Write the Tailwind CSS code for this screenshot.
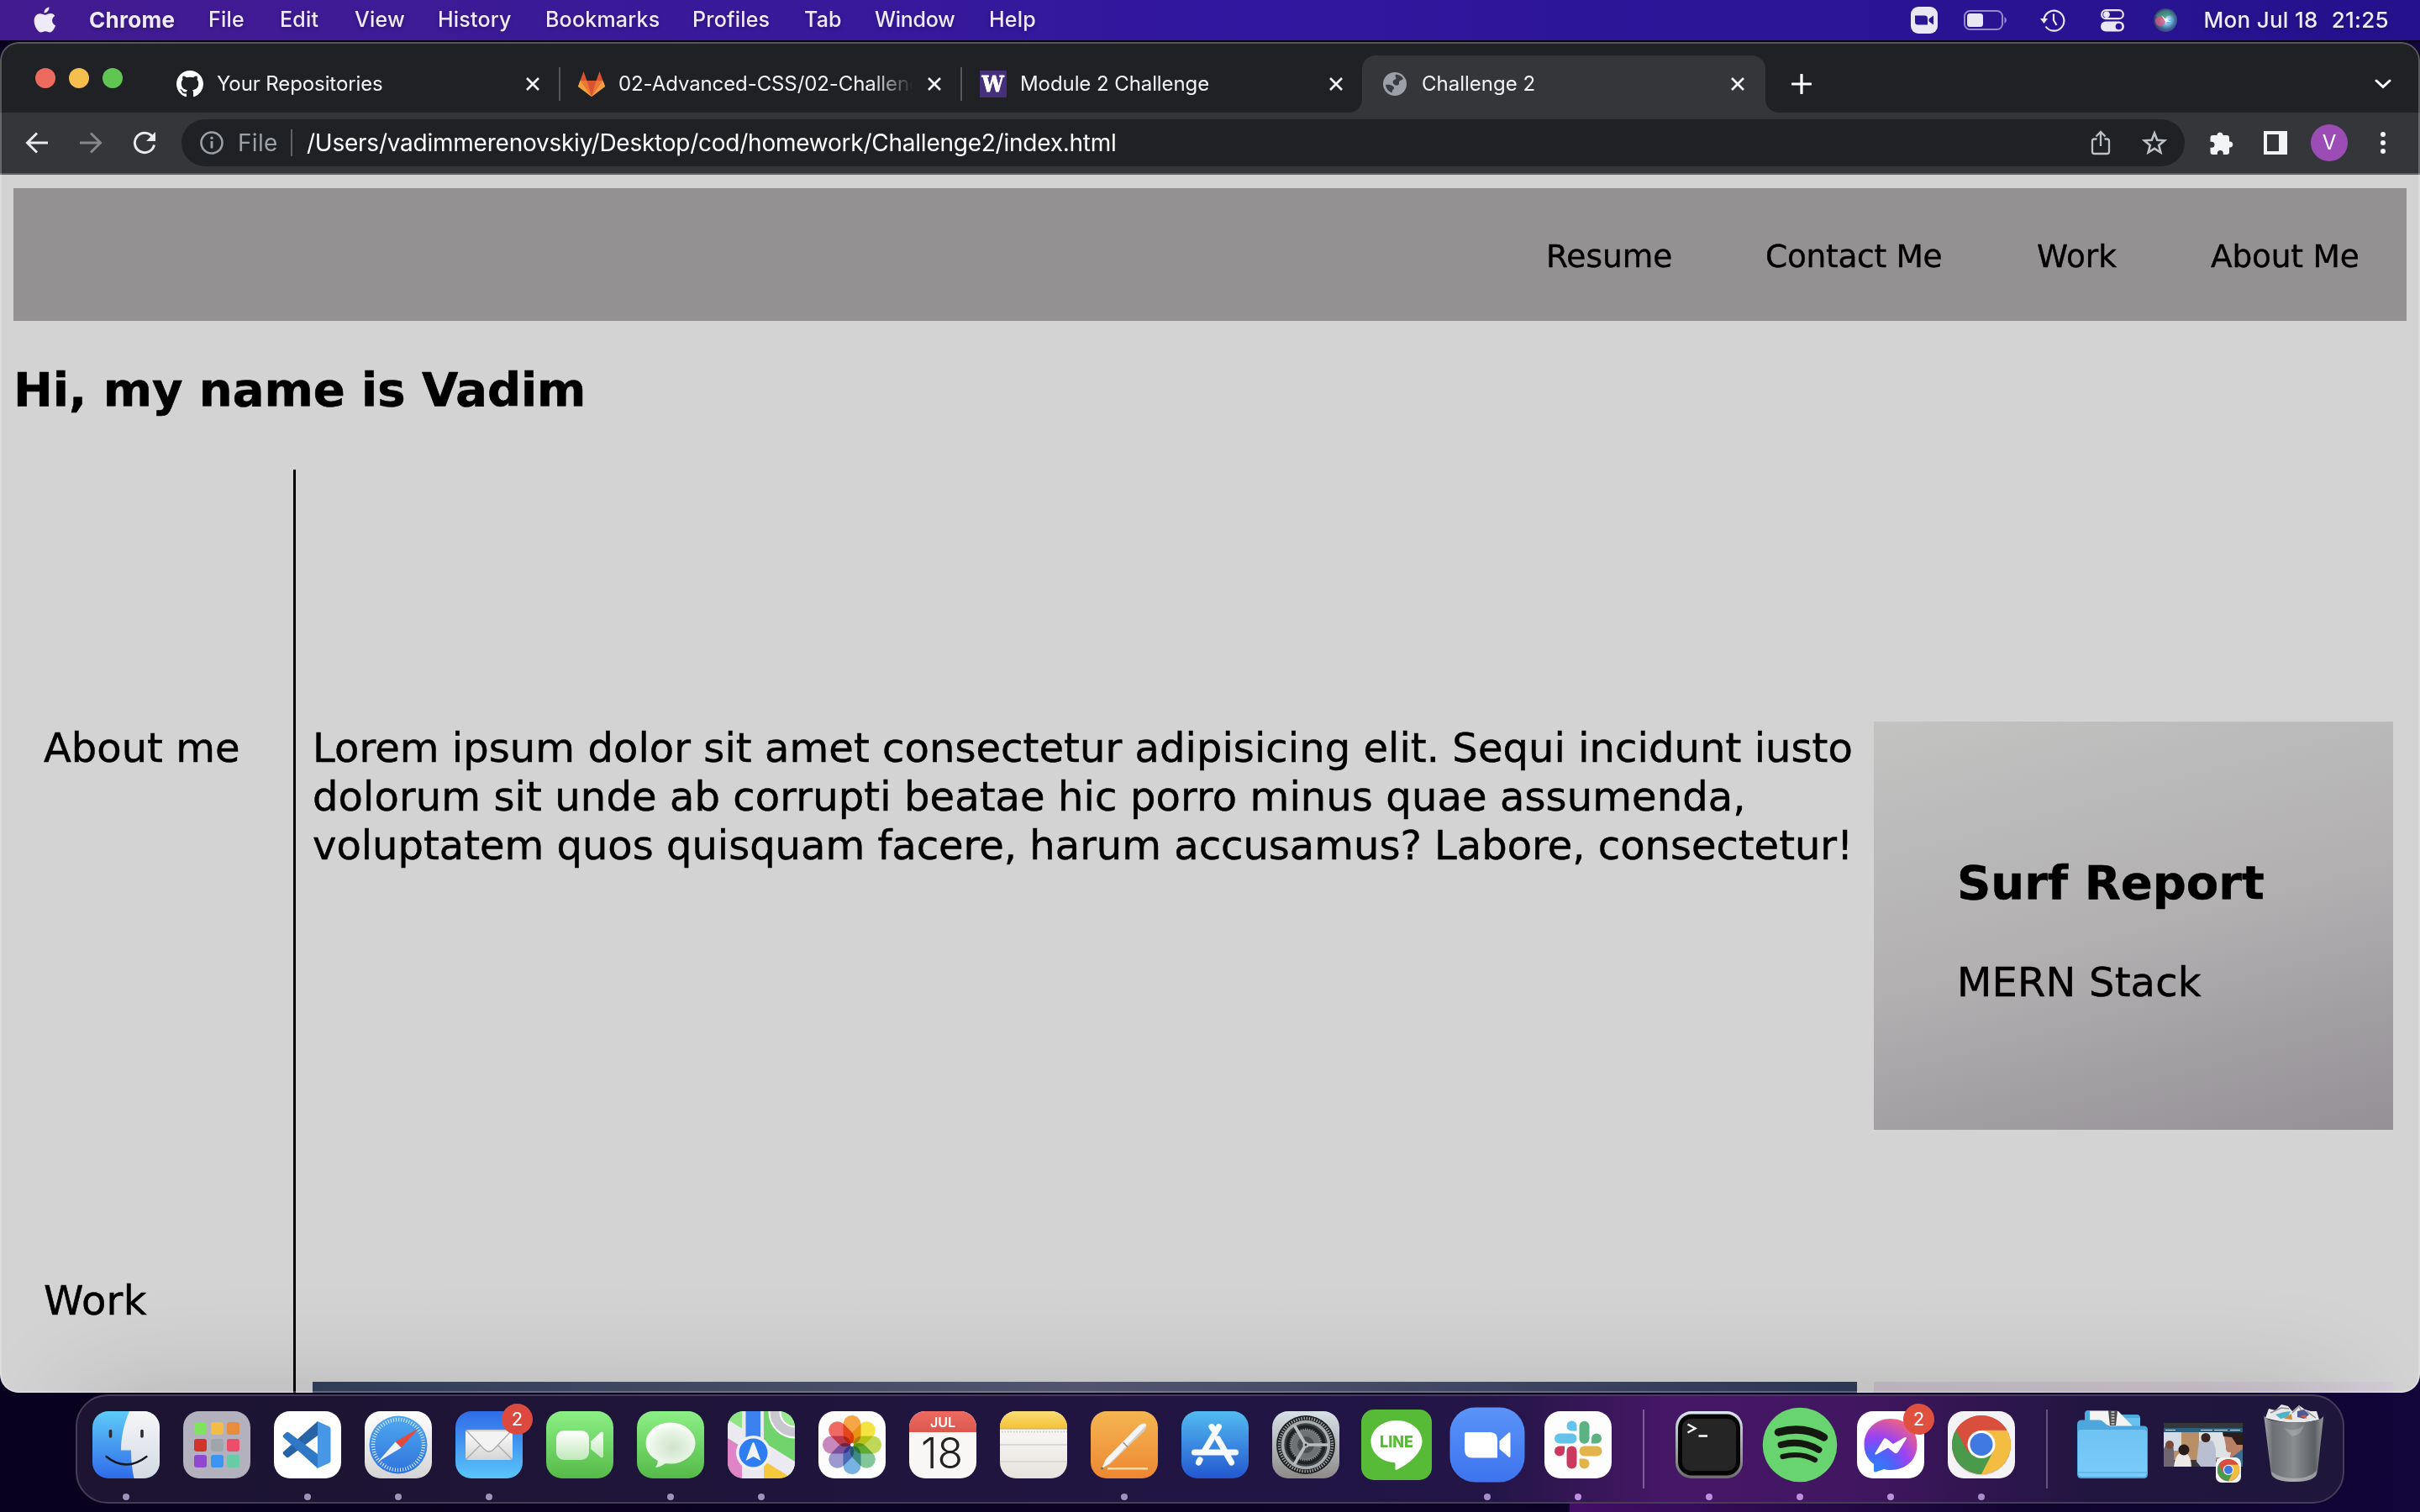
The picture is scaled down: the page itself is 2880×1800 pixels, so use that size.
<!DOCTYPE html>
<html lang="en">
<head>
<meta charset="utf-8">
<title>Challenge 2</title>
<script src="https://cdn.jsdelivr.net/npm/@tailwindcss/browser@4"></script>
</head>
<body class="w-[2880px] h-[1800px] overflow-hidden bg-[#0a0320]">

<!-- Shared gradients and symbols -->
<svg class="absolute w-0 h-0" aria-hidden="true">
  <defs>
    <linearGradient id="gFinder" x1="0" y1="0" x2="0" y2="1"><stop offset="0" stop-color="#5ecbf8"/><stop offset="1" stop-color="#2f6bea"/></linearGradient>
    <linearGradient id="gFace" x1="0" y1="0" x2="0" y2="1"><stop offset="0" stop-color="#f6f6f7"/><stop offset="1" stop-color="#d3dae4"/></linearGradient>
    <linearGradient id="gWhite" x1="0" y1="0" x2="0" y2="1"><stop offset="0" stop-color="#ffffff"/><stop offset="1" stop-color="#d4d4d4"/></linearGradient>
    <linearGradient id="gBlue" x1="0" y1="0" x2="0" y2="1"><stop offset="0" stop-color="#4fa9ee"/><stop offset="1" stop-color="#3073de"/></linearGradient>
    <linearGradient id="gMail" x1="0" y1="0" x2="0" y2="1"><stop offset="0" stop-color="#2f6be9"/><stop offset="1" stop-color="#5ac6f9"/></linearGradient>
    <linearGradient id="gGreen" x1="0" y1="0" x2="0" y2="1"><stop offset="0" stop-color="#8cf086"/><stop offset="1" stop-color="#55ba48"/></linearGradient>
    <linearGradient id="gCam" x1="0" y1="0" x2="0" y2="1"><stop offset="0" stop-color="#ffffff"/><stop offset="1" stop-color="#bfe8b8"/></linearGradient>
    <linearGradient id="gCal" x1="0" y1="0" x2="0" y2="1"><stop offset="0" stop-color="#ee6a60"/><stop offset="1" stop-color="#d9584e"/></linearGradient>
    <linearGradient id="gPaper" x1="0" y1="0" x2="0" y2="1"><stop offset="0" stop-color="#ffffff"/><stop offset="1" stop-color="#e6e2dc"/></linearGradient>
    <linearGradient id="gNote" x1="0" y1="0" x2="0" y2="1"><stop offset="0" stop-color="#f9dc75"/><stop offset="1" stop-color="#f4c236"/></linearGradient>
    <linearGradient id="gPages" x1="0" y1="0" x2="0" y2="1"><stop offset="0" stop-color="#f5b651"/><stop offset="1" stop-color="#ed8733"/></linearGradient>
    <linearGradient id="gStore" x1="0" y1="0" x2="0" y2="1"><stop offset="0" stop-color="#52bbf1"/><stop offset="1" stop-color="#2357cf"/></linearGradient>
    <linearGradient id="gGear" x1="0" y1="0" x2="0" y2="1"><stop offset="0" stop-color="#d7e1e8"/><stop offset="1" stop-color="#8d8a88"/></linearGradient>
    <linearGradient id="gZoom" x1="0" y1="0" x2="0" y2="1"><stop offset="0" stop-color="#5b93f9"/><stop offset="1" stop-color="#3d74ee"/></linearGradient>
    <linearGradient id="gTerm" x1="0" y1="0" x2="0" y2="1"><stop offset="0" stop-color="#d9e6ef"/><stop offset="1" stop-color="#6f6d6e"/></linearGradient>
    <radialGradient id="gMsgr" cx=".2" cy="1" r="1.1"><stop offset="0" stop-color="#2b85f7"/><stop offset=".35" stop-color="#4f62fa"/><stop offset=".6" stop-color="#9a42f5"/><stop offset="1" stop-color="#f3647c"/></radialGradient>
    <linearGradient id="gFold" x1="0" y1="0" x2="0" y2="1"><stop offset="0" stop-color="#6ec3f3"/><stop offset="1" stop-color="#7acbfa"/></linearGradient>
    <linearGradient id="gTrash" x1="0" y1="0" x2="1" y2="0"><stop offset="0" stop-color="#a2a4a7"/><stop offset=".15" stop-color="#6c6f73"/><stop offset=".5" stop-color="#8a8d90"/><stop offset=".85" stop-color="#5c5f63"/><stop offset="1" stop-color="#98999d"/></linearGradient>
    <radialGradient id="gBubble" cx=".55" cy=".6" r=".6"><stop offset="0" stop-color="#cfe3cb"/><stop offset=".7" stop-color="#eaf6e8"/><stop offset="1" stop-color="#ffffff"/></radialGradient>
    <radialGradient id="gSiri" cx=".55" cy=".5" r=".55"><stop offset="0" stop-color="#ffffff"/><stop offset=".3" stop-color="#8fc9e8"/><stop offset=".65" stop-color="#3f6fa0"/><stop offset="1" stop-color="#3a3566"/></radialGradient>
    <clipPath id="clipApp"><rect width="80" height="80" rx="19"/></clipPath>
    <symbol id="chromeLogo" viewBox="0 0 80 80" overflow="visible">
      <rect width="80" height="80" rx="19" fill="#f3f2f4"/>
      <circle cx="40" cy="41.500" r="35" fill="#000" opacity=".12"/>
      <circle cx="40" cy="40" r="35" fill="#d94f3d"/>
      <path d="M40 40 L9.700 22.500 A35 35 0 0 0 40 75 L55 49Z" fill="#4a9a4b"/>
      <path d="M40 75 A35 35 0 0 0 70.300 22.500 L40 22.500 L54 48Z" fill="#f3bd42"/>
      <path d="M9.700 22.500 A35 35 0 0 1 70.300 22.500 H40 L24 49Z" fill="#d94f3d"/>
      <circle cx="40" cy="39.500" r="16.500" fill="#fff"/>
      <circle cx="40" cy="39.500" r="13.500" fill="#4079e2"/>
    </symbol>
    <symbol id="closeX" viewBox="0 0 18 18"><path d="M2 2 L16 16 M16 2 L2 16" stroke="#f1f3f4" stroke-width="2.700" fill="none"/></symbol>
  </defs>
</svg>

<div class="flex h-[1800px] w-[2880px] flex-col bg-linear-to-r from-[#0a0320] from-0% via-[#0d0429] via-64% to-[#12063a] to-100%">

  <!-- Menu bar -->
  <header class="flex h-12 shrink-0 items-center bg-linear-to-r from-[#431b91] via-[#31179f] to-[#25118c] font-[Inter] text-[25px] font-medium tracking-[0.2px] text-[#eeeaf6] text-shadow-[0_2px_4px_rgb(0_0_0/0.25)] pb-[1px] pl-[39px]">
    <div class="w-[67px]">
      <svg class="h-[32px] w-[28px]" viewBox="0 0 28 32" fill="#eeeaf6"><path d="M19.500 0.500 c.3 3.500 -2.800 7 -6 7 c-.4 -3.300 2.900 -6.700 6 -7Z M26.300 11 c-2 1.300 -3.200 3.200 -3.200 5.400 c0 2.700 1.600 4.900 4 5.900 c-.9 2.900 -3.600 8.200 -6.600 8.200 c-2.200 0 -2.700 -1.300 -5.400 -1.300 c-2.700 0 -3.400 1.300 -5.400 1.300 c-3.600 0 -8.100 -7.500 -8.100 -13.800 c0 -5.300 3.400 -8.500 7 -8.500 c2.600 0 4.600 1.600 6.200 1.600 c1.500 0 3.800 -1.700 6.800 -1.700 c1.800 0 3.500 .9 4.700 2.900Z"/></svg>
    </div>
    <div class="w-[142px] text-[26px] font-bold tracking-[0.3px]">Chrome</div>
    <div class="w-[85px]">File</div>
    <div class="w-[89px]">Edit</div>
    <div class="w-[99px]">View</div>
    <div class="w-[128px]">History</div>
    <div class="w-[175px]">Bookmarks</div>
    <div class="w-[133px]">Profiles</div>
    <div class="w-[84px]">Tab</div>
    <div class="w-[136px] tracking-[-0.3px]">Window</div>
    <div>Help</div>
    <div class="ml-auto flex items-center pr-[37px]">
      <svg class="mr-[31px] h-8 w-8" viewBox="0 0 32 32"><rect width="32" height="32" rx="9" fill="#eae7f5"/><path d="M5 10.500h11.500a3.500 3.500 0 0 1 3.500 3.500v7.500H8.500a3.500 3.500 0 0 1-3.500-3.500Z M21.500 14.500 L27 10.500 V21.500 L21.500 17.500Z" fill="#2a1596"/></svg>
      <svg class="mr-[39px] h-6 w-[52px]" viewBox="0 0 52 24"><rect x="1" y="1" width="45" height="22" rx="6.500" fill="none" stroke="#fff" stroke-opacity=".5" stroke-width="2"/><rect x="4" y="4" width="19" height="16" rx="3.500" fill="#eae7f5"/><path d="M48.500 8 a4.500 4.500 0 0 1 0 8Z" fill="#fff" fill-opacity=".5"/></svg>
      <svg class="mr-[42px] h-[28px] w-[30px]" viewBox="0 0 30 28" fill="none" stroke="#eae7f5" stroke-width="2.200"><path d="M4.500 13 A12 12 0 1 1 6.500 21.500"/><path d="M16 6.500 V14 L19.500 20" stroke-width="2.200"/><path d="M0 12 H9 L4.500 18Z" fill="#eae7f5" stroke="none"/></svg>
      <svg class="mr-[35px] h-[28px] w-[28px]" viewBox="0 0 28 28"><rect x="1.200" y="2.200" width="25.600" height="10" rx="5" fill="none" stroke="#eae7f5" stroke-width="2.200"/><circle cx="7" cy="7.200" r="3.800" fill="#eae7f5"/><rect x="0" y="15.500" width="28" height="12" rx="6" fill="#eae7f5"/><circle cx="21.500" cy="21.500" r="3.800" fill="#2a1596"/></svg>
      <svg class="mr-[31px] h-[28px] w-[28px]" viewBox="0 0 28 28"><circle cx="14" cy="14" r="14" fill="url(#gSiri)"/><path d="M2 9 Q8 2 17 2 Q22 4 24 9 Q14 6 14 14Z" fill="#3f8f6a" opacity=".7"/><circle cx="8" cy="15" r="6" fill="#e0567e" opacity=".75"/><path d="M14 14 L24 13 L17 20Z" fill="#5aaef2" opacity=".7"/><path d="M9 8 L15 13 L21 16 L14 16Z" fill="#fff" opacity=".85"/></svg>
      <div class="mr-4 text-[26px] tracking-[0.3px]">Mon Jul 18</div>
      <div class="text-[26px] tracking-[0.3px]">21:25</div>
    </div>
  </header>

  <!-- Browser window -->
  <div class="h-[2px] shrink-0 bg-[#0b0418]"></div>
  <div class="relative flex h-[1608px] shrink-0 flex-col overflow-hidden rounded-[22px] bg-[#202124]">

    <!-- Tab strip -->
    <div class="flex h-[84px] shrink-0 items-end font-[Inter] text-2xl text-[#f1f3f4]">
      <div class="flex h-[84px] w-[188px] items-center gap-4 pl-[42px] pt-[2px]">
        <span class="size-6 rounded-full bg-[#ec6a5e]"></span>
        <span class="size-6 rounded-full bg-[#f4bf4f]"></span>
        <span class="size-6 rounded-full bg-[#61c554]"></span>
      </div>
      <div class="flex h-[68px] w-[478px] items-center pl-[22px] pr-[23px]">
        <svg class="mr-4 size-8 shrink-0" viewBox="0 0 16 16" fill="#fff"><path d="M8 0C3.580 0 0 3.580 0 8c0 3.540 2.290 6.530 5.470 7.590.4.070.55-.17.55-.38 0-.19-.01-.82-.01-1.490-2.010.37-2.530-.49-2.690-.94-.09-.23-.48-.94-.82-1.130-.28-.15-.68-.52-.01-.53.63-.01 1.080.58 1.230.82.72 1.210 1.870.87 2.330.66.07-.52.28-.87.51-1.070-1.780-.2-3.640-.89-3.640-3.950 0-.87.31-1.590.82-2.150-.08-.2-.36-1.020.08-2.120 0 0 .67-.21 2.200.82.64-.18 1.320-.27 2-.27s1.360.09 2 .27c1.530-1.040 2.200-.82 2.200-.82.44 1.100.16 1.920.08 2.120.51.56.82 1.270.82 2.150 0 3.070-1.870 3.750-3.650 3.950.29.25.54.73.54 1.480 0 1.070-.01 1.930-.01 2.200 0 .21.15.46.55.38A8.010 8.010 0 0 0 16 8c0-4.420-3.580-8-8-8Z"/></svg>
        <span class="flex-1 tracking-[-0.1px]">Your Repositories</span>
        <svg class="size-[18px]"><use href="#closeX"/></svg>
      </div>
      <div class="flex h-[68px] w-[478px] items-center">
        <span class="-ml-[1px] h-10 w-[2px] bg-[#56585c]"></span>
        <svg class="ml-[21px] mr-4 size-8 shrink-0" viewBox="0 0 32 32"><path d="M16 31 L0 19 L2.500 12 H29.500 L32 19Z" fill="#f0a13c"/><path d="M16 31 L2.500 12 L6.500 1 L10.500 12 H21.500 L25.500 1 L29.500 12Z" fill="#d9532f"/><path d="M16 31 L2.500 12 H10.500Z M16 31 L29.500 12 H21.500Z" fill="#ec7637"/><path d="M16 31 L2.500 12 L0 19Z M16 31 L29.500 12 L32 19Z" fill="#f0a13c"/></svg>
        <span class="w-[351px] overflow-hidden whitespace-nowrap tracking-[-0.1px] [mask-image:linear-gradient(90deg,#000_86%,transparent_100%)]">02-Advanced-CSS/02-Challeng</span>
        <svg class="ml-4 size-[18px]"><use href="#closeX"/></svg>
      </div>
      <div class="flex h-[68px] w-[477px] items-center pr-[22px]">
        <span class="-ml-[1px] h-10 w-[2px] bg-[#56585c]"></span>
        <span class="ml-[21px] mr-4 flex size-8 items-center justify-center bg-[#46307c] font-['DejaVu_Serif'] text-[26px] font-bold leading-none text-white"><span class="scale-x-90 [-webkit-text-stroke:0.8px_white]">W</span></span>
        <span class="flex-1 tracking-[-0.08px]">Module 2 Challenge</span>
        <svg class="size-[18px]"><use href="#closeX"/></svg>
      </div>
      <div class="relative flex h-[68px] w-[480px] items-center rounded-t-[16px] bg-[#35363a] pl-[25px] pr-[24px]">
        <svg class="absolute bottom-0 -left-4 size-4" viewBox="0 0 16 16"><path d="M16 0 V16 H0 A16 16 0 0 0 16 0Z" fill="#35363a"/></svg>
        <svg class="absolute bottom-0 -right-4 size-4" viewBox="0 0 16 16"><path d="M0 0 V16 H16 A16 16 0 0 1 0 0Z" fill="#35363a"/></svg>
        <svg class="mr-[18px] size-[28px] shrink-0" viewBox="0 0 28 28"><circle cx="14" cy="14" r="14" fill="#9aa0a6"/><path d="M15 2.800 C19 2.800 22.500 5 24 8 C22.500 9.500 21 9 19.500 10.500 C18.500 12 19.500 13.500 18.500 14.800 C17 16.500 14 15.500 12.500 14 C11 12.500 11.500 10.500 12.500 9.500 C13.500 8.500 15.500 8.500 15.500 7 C15.500 5.500 13.500 5 15 2.800Z M3 15 C5.500 14.300 9.500 14.800 11.500 16.500 C13.500 18 13.500 19.500 12 20.500 C10.500 21.500 11 23.500 10.500 24.500 C6.500 23 3.500 19.500 3 15Z" fill="#35363a" opacity=".95"/></svg>
        <span class="flex-1">Challenge 2</span>
        <svg class="size-[18px]"><use href="#closeX"/></svg>
      </div>
      <div class="flex h-[68px] flex-1 items-center justify-between pl-[31px] pr-[34px]">
        <svg class="size-6" viewBox="0 0 24 24"><path d="M12 1 V23 M1 12 H23" stroke="#fff" stroke-width="3.200" stroke-linecap="round"/></svg>
        <svg class="h-3 w-5" viewBox="0 0 20 12"><path d="M2 2 L10 9.500 L18 2" stroke="#fff" stroke-width="3" fill="none" stroke-linecap="round"/></svg>
      </div>
    </div>

    <!-- Toolbar -->
    <div class="flex h-[72px] shrink-0 items-center bg-[#35363a] px-3 font-[Inter] text-[28px]">
      <div class="flex w-16 justify-center"><svg class="size-[28px]" viewBox="0 0 28 28"><path d="M27 14 H3 M14 2.500 L2.500 14 L14 25.500" stroke="#e8eaed" stroke-width="3" fill="none"/></svg></div>
      <div class="flex w-16 justify-center"><svg class="size-[28px]" viewBox="0 0 28 28"><path d="M1 14 H25 M14 2.500 L25.500 14 L14 25.500" stroke="#85878b" stroke-width="3" fill="none"/></svg></div>
      <div class="flex w-16 justify-center"><svg class="size-[28px]" viewBox="0 0 28 28"><path d="M23.500 7 A11.700 11.700 0 1 0 25.500 16.500" stroke="#e8eaed" stroke-width="3" fill="none"/><path d="M27 1 V12 H16Z" fill="#e8eaed"/></svg></div>
      <div class="ml-3 flex h-14 w-[2384px] items-center rounded-full bg-[#202124] pl-[22px] pr-1">
        <svg class="size-[28px] shrink-0" viewBox="0 0 28 28"><circle cx="14" cy="14" r="12.500" stroke="#9aa0a6" stroke-width="2.600" fill="none"/><path d="M14 12 V20.500" stroke="#9aa0a6" stroke-width="2.800"/><circle cx="14" cy="8.300" r="1.700" fill="#9aa0a6"/></svg>
        <span class="ml-[17px] w-[63px] tracking-[0.3px] text-[#9aa0a6]">File</span>
        <span class="h-8 w-[2px] bg-[#5f6368]"></span>
        <span class="ml-[17px] flex-1 whitespace-nowrap tracking-[-0.24px] text-white">/Users/vadimmerenovskiy/Desktop/cod/homework/Challenge2/index.html</span>
        <div class="flex w-16 justify-center"><svg class="h-[30px] w-[24px]" viewBox="0 0 24 30"><path d="M7.500 10.500 H4.500 A2.500 2.500 0 0 0 2 13 V25.500 A2.500 2.500 0 0 0 4.500 28 H19.500 A2.500 2.500 0 0 0 22 25.500 V13 A2.500 2.500 0 0 0 19.500 10.500 H16.500 M12 19 V2.500 M6.500 7.500 L12 2 L17.500 7.500" stroke="#bdc1c6" stroke-width="2.300" fill="none"/></svg></div>
        <div class="flex w-16 justify-center"><svg class="size-[30px]" viewBox="0 0 30 30"><path d="M15 3.500 L18.200 11.700 L27 12.300 L20.200 18 L22.400 26.500 L15 21.800 L7.600 26.500 L9.800 18 L3 12.300 L11.800 11.700Z" stroke="#bdc1c6" stroke-width="2.600" fill="none"/></svg></div>
      </div>
      <div class="ml-3 flex w-16 justify-center"><svg class="size-[30px]" viewBox="0 0 30 30" fill="#f1f3f4"><path d="M9.500 5 A3.700 3.700 0 0 1 16.500 5 V6 H21 A3 3 0 0 1 24 9 V13.500 H25.500 A3.600 3.600 0 0 1 25.500 20.500 H24 V26 A3 3 0 0 1 21 29 H16.800 V27.500 A3.500 3.500 0 0 0 9.800 27.500 V29 H4.500 A3 3 0 0 1 1.500 26 V20.800 H3 A3.500 3.500 0 0 0 3 13.800 H1.500 V9 A3 3 0 0 1 4.500 6 H9.500Z"/></svg></div>
      <div class="flex w-16 justify-center"><svg class="size-[28px]" viewBox="0 0 28 28"><path fill-rule="evenodd" d="M0 0 H28 V28 H0Z M4 4 V24 H18 V4Z" fill="#f1f3f4"/></svg></div>
      <div class="flex w-16 justify-center"><span class="flex size-11 items-center justify-center rounded-full bg-[#9c4db5] text-2xl text-white">V</span></div>
      <div class="flex w-16 flex-col items-center gap-1"><span class="size-[6px] rounded-full bg-[#f1f3f4]"></span><span class="size-[6px] rounded-full bg-[#f1f3f4]"></span><span class="size-[6px] rounded-full bg-[#f1f3f4]"></span></div>
    </div>
    <div class="h-[2px] shrink-0 bg-[#5d5e61]"></div>

    <!-- Page -->
    <div class="flex flex-1 flex-col overflow-hidden bg-[#d3d3d3] px-4 pt-4 font-['DejaVu_Sans',Verdana,sans-serif] text-black">
      <nav class="flex h-[158px] shrink-0 items-center justify-end bg-[#949192] pr-[57px] pt-[5px] text-[37.5px] leading-none whitespace-nowrap [-webkit-text-stroke:0.4px_black]">
        <a class="w-[261px]">Resume</a>
        <a class="w-[323px] tracking-[-0.3px]">Contact Me</a>
        <a class="w-[207px]">Work</a>
        <a class="w-[176px] tracking-[-0.2px]">About Me</a>
      </nav>
      <h1 class="mt-[48px] text-[56px] font-bold leading-[68px] tracking-[-0.05px] [-webkit-text-stroke:0.6px_black]">Hi, my name is Vadim</h1>
      <main class="mt-[61px] flex h-[1099px] shrink-0 text-5xl leading-[58px] [-webkit-text-stroke:0.5px_black]">
        <aside class="w-[336px] shrink-0 border-r-[3px] border-black pl-9 pt-[302px]">
          <p class="leading-[58px]">About me</p>
          <p class="mt-[600px] leading-[58px] tracking-[0.3px]">Work</p>
        </aside>
        <section class="ml-5 w-[1838px] shrink-0 pt-[302px]">
          <p class="whitespace-nowrap leading-[58px]"><span class="tracking-[0.06px]">Lorem ipsum dolor sit amet consectetur adipisicing elit. Sequi incidunt iusto</span><br><span class="tracking-[0.1px]">dolorum sit unde ab corrupti beatae hic porro minus quae assumenda,</span><br><span class="tracking-[-0.01px]">voluptatem quos quisquam facere, harum accusamus? Labore, consectetur!</span></p>
          <div class="mt-[610px] h-4 bg-linear-to-r from-[#33415f] via-[#595b78] to-[#2f3b5c]"></div>
        </section>
        <section class="ml-5 w-[618px] shrink-0 pt-[300px]">
          <div class="h-[486px] bg-linear-165 from-[#c3c3c2] via-[#b2b0b1] to-[#949096] pl-[99px] pt-[158px]">
            <h2 class="text-[56px] font-bold leading-[68px]">Surf Report</h2>
            <p class="mt-[55px] leading-[58px] tracking-[0.15px]">MERN Stack</p>
          </div>
          <div class="mt-[300px] h-4 bg-linear-to-r from-[#c9c0c9] to-[#d3cbd5]"></div>
        </section>
      </main>
    </div>
    <div class="pointer-events-none absolute inset-0 rounded-[22px] inset-ring-2 inset-ring-white/25"></div>
  </div>

  <!-- Dock -->
  <div class="relative mt-[2px] h-[140px] shrink-0">
    <div class="absolute bottom-0 left-[1868px] h-[12px] w-[560px] bg-linear-to-r from-[#4a1070] to-transparent"></div>
    <div class="relative ml-[90px] flex h-[130px] w-[2700px] rounded-[38px] border-2 border-[#453c58] bg-linear-to-r from-[#1c1430] from-0% via-[#221547] via-60% to-[#1f163c] to-100% px-1 pt-[18px] shadow-[0_0_130px_rgb(0_0_0/0.17)]">
      <div class="pointer-events-none absolute inset-0 rounded-[36px] bg-[linear-gradient(90deg,transparent_62%,#451765_70%,#431662_78%,transparent_89%)]"></div>

      <div class="relative flex w-27 flex-col items-center">
        <svg class="size-20 overflow-visible" viewBox="0 0 80 80"><g clip-path="url(#clipApp)"><rect width="80" height="80" fill="url(#gFinder)"/><path d="M44 0 C37 16 34 32 34 46.500 H46 C46 60 47.500 70 49.500 80 H80 V0Z" fill="url(#gFace)"/></g><path d="M21.500 23.500 V30 M59 23.500 V30" stroke="#2a2c33" stroke-width="3.600" stroke-linecap="round"/><path d="M16.500 54 Q40 73 64.500 54" stroke="#16181d" stroke-width="2.400" fill="none" stroke-linecap="round"/></svg>
        <span class="mt-[18px] size-2 rounded-full bg-[#9d93b8]"></span>
      </div>
      <div class="relative flex w-27 flex-col items-center">
        <svg class="size-20" viewBox="0 0 80 80"><rect width="80" height="80" rx="19" fill="#b3b1bd"/><rect x="13" y="13" width="15" height="15" rx="3" fill="#7fe35d"/><rect x="33" y="13" width="15" height="15" rx="3" fill="#f3bd45"/><rect x="52" y="13" width="15" height="15" rx="3" fill="#e88d3c"/><rect x="13" y="33" width="15" height="15" rx="3" fill="#d0342a"/><rect x="33" y="33" width="15" height="15" rx="3" fill="#9fa6ab"/><rect x="52" y="33" width="15" height="15" rx="3" fill="#ea4e68"/><rect x="13" y="52" width="15" height="15" rx="3" fill="#8f48cf"/><rect x="33" y="52" width="15" height="15" rx="3" fill="#3b93f2"/><rect x="52" y="52" width="15" height="15" rx="3" fill="#69cba6"/></svg>
      </div>
      <div class="relative flex w-27 flex-col items-center">
        <svg class="size-20" viewBox="0 0 80 80"><rect width="80" height="80" rx="19" fill="#fff"/><path d="M52 12 L11 48.500 Q10 50 11.500 51.500 L15 55 Q16.500 55.500 18 54.500 L56 26Z" fill="#2764a6"/><path d="M52 68 L11 31 Q10 29.500 11.500 28 L15 25 Q16.500 24.500 18 25.500 L56 54Z" fill="#2f78c6"/><path d="M52 12 L66 18.500 Q67.500 19.500 67.500 21 V59 Q67.500 60.500 66 61.500 L52 68 Q51 67 52 64Z" fill="#4797e6"/></svg>
        <span class="mt-[18px] size-2 rounded-full bg-[#9d93b8]"></span>
      </div>
      <div class="relative flex w-27 flex-col items-center">
        <svg class="size-20" viewBox="0 0 80 80"><rect width="80" height="80" rx="19" fill="url(#gWhite)"/><circle cx="40" cy="40" r="34.500" fill="url(#gBlue)"/><circle cx="40" cy="40" r="30" fill="none" stroke="#e4f0fc" stroke-width="4.500" stroke-dasharray="1 2.140"/><path d="M64.500 20 L43.500 43.500 L36.500 36.500Z" fill="#e5493b"/><path d="M16 60 L43.500 43.500 L36.500 36.500Z" fill="#f4f4f4"/></svg>
        <span class="mt-[18px] size-2 rounded-full bg-[#9d93b8]"></span>
      </div>
      <div class="relative flex w-27 flex-col items-center">
        <svg class="size-20" viewBox="0 0 80 80"><rect width="80" height="80" rx="19" fill="url(#gMail)"/><rect x="12" y="22" width="56" height="36" rx="3.500" fill="url(#gWhite)"/><path d="M13 57 L32 38 M67 57 L48 38" stroke="#a9a9a9" stroke-width="1.200"/><path d="M13 23 L34 45 Q40 51 46 45 L67 23 Z" fill="#f3f3f3" stroke="#a9a9a9" stroke-width="1.200"/></svg>
        <span class="mt-[18px] size-2 rounded-full bg-[#9d93b8]"></span>
        <span class="absolute -top-[9px] left-[69px] flex size-[37px] items-center justify-center rounded-full bg-[#dc4a3f] font-[Inter] text-[22px] text-white">2</span>
      </div>
      <div class="relative flex w-27 flex-col items-center">
        <svg class="size-20" viewBox="0 0 80 80"><rect width="80" height="80" rx="19" fill="url(#gGreen)"/><rect x="12" y="23" width="39" height="35" rx="9" fill="url(#gCam)"/><path d="M53 36 L65 25 Q68 23.500 68 27 V53 Q68 56.500 65 55 L53 45Z" fill="url(#gCam)"/></svg>
      </div>
      <div class="relative flex w-27 flex-col items-center">
        <svg class="size-20" viewBox="0 0 80 80"><rect width="80" height="80" rx="19" fill="url(#gGreen)"/><path d="M24 56 Q26 62 22 67 Q30 66 35 61Z" fill="#e3f4e0"/><ellipse cx="40" cy="38" rx="29.500" ry="24.500" fill="url(#gBubble)"/></svg>
        <span class="mt-[18px] size-2 rounded-full bg-[#9d93b8]"></span>
      </div>
      <div class="relative flex w-27 flex-col items-center">
        <svg class="size-20" viewBox="0 0 80 80"><g clip-path="url(#clipApp)"><rect width="80" height="80" fill="#70d36c"/><rect width="18" height="30" fill="#8fe585"/><path d="M0 32 L20 45 V80 H0Z" fill="#df84c6"/><path d="M43 52 L76 80 H43Z" fill="#f5c83e"/><path d="M0 10 L80 60 V82 L0 32Z" fill="#eceaf1"/><rect x="17" width="26" height="80" fill="#e9e8ef"/><rect x="21.500" width="17.500" height="40" fill="#3b82ee"/><circle cx="80" cy="1" r="24" fill="#9be792" stroke="#fff" stroke-width="15"/><circle cx="80" cy="1" r="24" fill="none" stroke="#c8c7d0" stroke-width="11"/></g><circle cx="30.500" cy="49.500" r="20.500" fill="#f1f1f5"/><circle cx="30.500" cy="49.500" r="17" fill="#2f7df3"/><path d="M30.500 37 Q31.500 37 32 38.500 L39.500 59 L30.500 54 L21.500 59 L29 38.500 Q29.500 37 30.500 37Z" fill="#f2f3f6"/></svg>
        <span class="mt-[18px] size-2 rounded-full bg-[#9d93b8]"></span>
      </div>
      <div class="relative flex w-27 flex-col items-center">
        <svg class="size-20" viewBox="0 0 80 80"><rect width="80" height="80" rx="19" fill="#fdfdfd"/><g class="isolate"><rect class="mix-blend-multiply" x="29.500" y="5" width="21" height="34" rx="10.500" fill="#f6a547"/><rect class="mix-blend-multiply" x="29.500" y="5" width="21" height="34" rx="10.500" fill="#f3e444" transform="rotate(45 40 40)"/><rect class="mix-blend-multiply" x="29.500" y="5" width="21" height="34" rx="10.500" fill="#bfd857" transform="rotate(90 40 40)"/><rect class="mix-blend-multiply" x="29.500" y="5" width="21" height="34" rx="10.500" fill="#82c79a" transform="rotate(135 40 40)"/><rect class="mix-blend-multiply" x="29.500" y="5" width="21" height="34" rx="10.500" fill="#78b2e2" transform="rotate(180 40 40)"/><rect class="mix-blend-multiply" x="29.500" y="5" width="21" height="34" rx="10.500" fill="#9c98d0" transform="rotate(225 40 40)"/><rect class="mix-blend-multiply" x="29.500" y="5" width="21" height="34" rx="10.500" fill="#c887bd" transform="rotate(270 40 40)"/><rect class="mix-blend-multiply" x="29.500" y="5" width="21" height="34" rx="10.500" fill="#ee6a62" transform="rotate(315 40 40)"/></g><circle cx="40" cy="40" r="2" fill="#fff"/></svg>
      </div>
      <div class="relative flex w-27 flex-col items-center">
        <svg class="size-20" viewBox="0 0 80 80"><g clip-path="url(#clipApp)"><rect width="80" height="80" fill="#f8f7f5"/><rect width="80" height="25" fill="url(#gCal)"/></g><text x="40" y="19" text-anchor="middle" font-family="Inter" font-weight="600" font-size="16" fill="#fff">JUL</text><text x="39" y="68" text-anchor="middle" font-family="Inter" font-weight="300" font-size="50" textLength="50" fill="#222">18</text></svg>
      </div>
      <div class="relative flex w-27 flex-col items-center">
        <svg class="size-20" viewBox="0 0 80 80"><g clip-path="url(#clipApp)"><rect width="80" height="80" fill="url(#gPaper)"/><rect width="80" height="21" fill="url(#gNote)"/><path d="M0 21 H80" stroke="#b9a878" stroke-width="1.200"/><path d="M2 24.500 H80" stroke="#c9c7c3" stroke-width="2" stroke-dasharray="1.500 2"/><path d="M0 40 H80 M0 60 H80" stroke="#d2d2d6" stroke-width="1.600"/></g></svg>
      </div>
      <div class="relative flex w-27 flex-col items-center">
        <svg class="size-20" viewBox="0 0 80 80"><rect width="80" height="80" rx="19" fill="url(#gPages)"/><rect x="20" y="67" width="48" height="2.500" fill="#fbdcab"/><path d="M13 68.500 L18 57 L58 16.500 Q63 13 66 15.500 Q67 19 63.500 23.500 L23 62Z" fill="#f6f5f4"/><path d="M14 67.500 L23 62 L66 17 Q67 20 63.500 23.500 L23 63Z" fill="#cfccca"/><path d="M38.500 37 L44 42.500" stroke="#9b8c7c" stroke-width="1.500"/><circle cx="13.500" cy="68" r="1.600" fill="#8a6a48"/></svg>
        <span class="mt-[18px] size-2 rounded-full bg-[#9d93b8]"></span>
      </div>
      <div class="relative flex w-27 flex-col items-center">
        <svg class="size-20" viewBox="0 0 80 80"><rect width="80" height="80" rx="19" fill="url(#gStore)"/><g stroke="#f7fafd" stroke-width="7.200" stroke-linecap="round"><path d="M36 18.500 L39 23"/><path d="M44.500 18.500 L27.500 47"/><path d="M22 58 L20.500 61"/><path d="M15.500 49 H64.500"/><path d="M43.500 33 L59.500 61"/></g></svg>
      </div>
      <div class="relative flex w-27 flex-col items-center">
        <svg class="size-20" viewBox="0 0 80 80"><rect width="80" height="80" rx="19" fill="url(#gGear)"/><circle cx="40" cy="40" r="35" fill="#1d1f21"/><circle cx="40" cy="40" r="31.500" fill="none" stroke="#a0a4a6" stroke-width="3.500" stroke-dasharray="1.400 1.700"/><circle cx="40" cy="40" r="27.500" fill="#3f4244" stroke="#a9adaf" stroke-width="3.600"/><circle cx="40" cy="40" r="20.500" fill="none" stroke="#1f2123" stroke-width="6"/><circle cx="40" cy="40" r="18" fill="#6f7274" stroke="#85888a" stroke-width="3" stroke-dasharray="1.300 1.300"/><circle cx="40" cy="40" r="10" fill="#4b4e50"/><path d="M40 40 H67 M40 40 L26.500 17 M40 40 L26.500 63" stroke="#b9bdbf" stroke-width="3.600"/><circle cx="40" cy="40" r="3.500" fill="#b9bdbf"/><circle cx="40" cy="40" r="1.500" fill="#333"/></svg>
      </div>
      <div class="relative flex w-27 flex-col items-center">
        <svg class="size-20 overflow-visible" viewBox="0 0 80 80"><rect x="-2" y="-2" width="84" height="84" rx="15" fill="#57bb37"/><path d="M40 11 C57 11 70.500 22 70.500 36 C70.500 48 57 62 39.500 70 Q38 70 38.500 66 Q39 61 37 61 C21 60 9.500 49 9.500 36 C9.500 22 23 11 40 11Z" fill="#fff"/><text x="40" y="43" text-anchor="middle" font-family="Inter" font-weight="800" font-size="19" textLength="40" lengthAdjust="spacingAndGlyphs" fill="#57bb37">LINE</text></svg>
      </div>
      <div class="relative flex w-27 flex-col items-center">
        <svg class="size-20 overflow-visible" viewBox="0 0 80 80"><rect x="-4.500" y="-4.500" width="89" height="89" rx="30" fill="url(#gZoom)"/><path d="M15 25 H43 Q52 25 52 34 V55.500 H22 Q13 55.500 13 46 V27 Q13 25 15 25Z" fill="#fff"/><path d="M54.500 35.500 L65.500 25.500 Q67.500 24.500 67.500 27 V53 Q67.500 56 65.500 54.500 L54.500 45Z" fill="#fff"/></svg>
        <span class="mt-[18px] size-2 rounded-full bg-[#a78bcb]"></span>
      </div>
      <div class="relative flex w-27 flex-col items-center">
        <svg class="size-20" viewBox="0 0 80 80"><rect width="80" height="80" rx="19" fill="#fdfdfd"/><g fill="#63c3ea"><path d="M38.500 23.500 H32.500 A6 6 0 1 1 38.500 17.500Z"/><rect x="12" y="26.500" width="26.500" height="12" rx="6"/></g><g fill="#5cb283"><rect x="41.500" y="11.700" width="12" height="27" rx="6"/><path d="M56 38.500 V32.500 A6 6 0 1 1 62 38.500Z"/></g><g fill="#cd3861"><path d="M24 41.500 V47.500 A6 6 0 1 1 18 41.500Z"/><rect x="26.500" y="41.500" width="12" height="27" rx="6"/></g><g fill="#e3b34c"><rect x="41.500" y="41.500" width="27" height="12" rx="6"/><path d="M41.500 56.500 H47.500 A6 6 0 1 1 41.500 62.500Z"/></g></svg>
        <span class="mt-[18px] size-2 rounded-full bg-[#be8fe0]"></span>
      </div>

      <div class="relative flex w-12 justify-center"><span class="-mt-[2px] h-[94px] w-[2px] bg-[#7d5a9a]"></span></div>

      <div class="relative flex w-27 flex-col items-center">
        <svg class="size-20" viewBox="0 0 80 80"><rect width="80" height="80" rx="19" fill="url(#gTerm)"/><rect x="3" y="3.500" width="74" height="73" rx="16" fill="#060606"/><rect x="8" y="9" width="64" height="62" rx="10" fill="#252525"/><path d="M14.500 15.500 L23.500 20.500 L14.500 25.500 M27.500 29.500 H38" stroke="#fff" stroke-width="2.400" fill="none"/></svg>
        <span class="mt-[18px] size-2 rounded-full bg-[#be8fe0]"></span>
      </div>
      <div class="relative flex w-27 flex-col items-center">
        <svg class="size-20 overflow-visible" viewBox="0 0 80 80"><circle cx="40" cy="40" r="44.300" fill="#67d46f"/><g fill="none" stroke="#14190f" stroke-linecap="round"><path d="M14.500 25 Q44 17 68.500 31" stroke-width="9.500"/><path d="M17.500 40 Q42 33.500 62.500 46" stroke-width="7.800"/><path d="M19.500 54 Q41 48.500 58 58" stroke-width="6.200"/></g></svg>
        <span class="mt-[18px] size-2 rounded-full bg-[#be8fe0]"></span>
      </div>
      <div class="relative flex w-27 flex-col items-center">
        <svg class="size-20" viewBox="0 0 80 80"><rect width="80" height="80" rx="19" fill="#fff"/><path d="M40 9 C58 9 71.500 22 71.500 40 C71.500 58 58 70 40 70 Q35 70 32 69 L22 72.500 Q20 73 20 70.500 V63 C12 57 8.500 49 8.500 40 C8.500 22 22 9 40 9Z" fill="url(#gMsgr)"/><path d="M21.500 50 L31.500 33.500 Q33 31.500 35.500 33 L43 39 L57 31 Q60 30.500 58.500 33 L49 48.500 Q47 51 44.500 49.500 L37 43.500 L23 51.500 Q20.500 52 21.500 50Z" fill="#fff"/></svg>
        <span class="mt-[18px] size-2 rounded-full bg-[#b594d8]"></span>
        <span class="absolute -top-[9px] left-[69px] flex size-[37px] items-center justify-center rounded-full bg-[#e0503f] font-[Inter] text-[22px] text-white">2</span>
      </div>
      <div class="relative flex w-27 flex-col items-center">
        <svg class="size-20" viewBox="0 0 80 80"><use href="#chromeLogo" width="80" height="80"/></svg>
        <span class="mt-[18px] size-2 rounded-full bg-[#a78bcb]"></span>
      </div>

      <div class="relative flex w-12 justify-center"><span class="-mt-[2px] h-[94px] w-[2px] bg-[#63517f]"></span></div>

      <div class="relative flex w-27 flex-col items-center">
        <svg class="size-20 overflow-visible" viewBox="0 0 80 80"><path d="M7 3 Q7 -1 11 -1 H42 L48 4 H69 Q73 4 73 8 V30 H7Z" fill="#4ea9df"/><path d="M45 8 H73 V30 H45Z" fill="#6cc0f0"/><path d="M13 0 H47 L64 18 V24 H13Z" fill="#f4f4f4"/><path d="M35 -1 H46 L44 17 H37Z" fill="#4a4a4d"/><path d="M40.500 0 V17" stroke="#b9b9bb" stroke-width="4" stroke-dasharray="2 1.500"/><path d="M-2 16 Q-2 10.500 3 10.500 H24 Q27 10.500 29 12.500 L33 16 Q35 17.500 38 17.500 H77 Q82 17.500 82 22 V75 Q82 80 77 80 H3 Q-2 80 -2 75Z" fill="#4da6dc"/><path d="M-1 26 Q-1 22 3 22 H77 Q81 22 81 26 V73 Q81 78 77 78 H3 Q-1 78 -1 73Z" fill="url(#gFold)"/><path d="M-1 73 H81" stroke="#5db3e6" stroke-width="1.500"/></svg>
      </div>
      <div class="relative flex w-27 flex-col items-center">
        <svg class="size-20 overflow-visible" viewBox="0 0 80 80"><rect x="-7" y="14" width="94" height="52" fill="#b98f68"/><rect x="-7" y="14" width="94" height="6" fill="#35363a"/><rect x="-7" y="20" width="94" height="5" fill="#2b5f80"/><path d="M-5 22.500 H7 M37 22.500 H51 M53 22.500 H69 M72 22.500 H84" stroke="#cfe0ea" stroke-width="1"/><rect x="-7" y="25" width="21" height="22" fill="#d5dbe4"/><rect x="35" y="25" width="52" height="30" fill="#dfe2e4"/><rect x="-7" y="58" width="94" height="8" fill="#3b3538"/><path d="M-7 45 Q-3 35 3 37 Q6 44 5 66 H-7Z" fill="#6e6570"/><circle cx="0" cy="40" r="5" fill="#7a4a38"/><path d="M5 66 Q7 49 16 49 Q25 49 26 66Z" fill="#ece8e6"/><circle cx="17" cy="46" r="6.500" fill="#2a1c1a"/><path d="M32 60 L35 36 Q42 31 52 36 L55 46 V66 H37Z" fill="#b9bfd0"/><circle cx="43" cy="31.500" r="5.500" fill="#3a2621"/><path d="M87 25 V62 H70 L73 49 Q66 50 67 42 L64 26Z" fill="#b87f65"/><path d="M63 25 H87 V40 H80 L74 31 L64 30Z" fill="#2b1d1a"/><path d="M74 55 L87 45 V66 H72Z" fill="#3e6d90"/><svg x="55" y="55" width="30" height="30" viewBox="0 0 80 80" overflow="visible"><use href="#chromeLogo" width="80" height="80"/></svg></svg>
      </div>
      <div class="relative flex w-27 flex-col items-center">
        <svg class="size-20 overflow-visible" viewBox="0 0 80 80"><path d="M6 8 L10 -3 L18 -1 L25 -8 L33 -6 L38 0 L46 -7 L53 -2 L60 0 L67 0 L70 10 Q40 18 6 8Z" fill="#e9e9ea"/><path d="M12 2 L25 -4 L34 -3 M38 2 L46 -6 L50 2 M55 0 L66 8" stroke="#8c8c90" stroke-width="1.500" fill="none"/><path d="M18 4 L28 1 L36 0 L33 7 L24 9Z" fill="#4fb3c9"/><path d="M28 9 L37 3 L38 10Z" fill="#c98b3c"/><path d="M44 0 L52 -2 L58 4 L52 9 L44 7Z" fill="#4f5a92"/><path d="M47 6 L54 4 L55 9Z" fill="#cf5a3c"/><path d="M4 4 Q4 9 14 11 Q40 16 66 11 Q76 9 75.500 3 L68 72 Q66 84 40 84 Q14 84 12.500 72Z" fill="url(#gTrash)"/><path d="M28 20 Q42 26 52 16 Q50 28 38 30Z" fill="#fff" opacity=".18"/><path d="M13 72 Q24 80 40 80 Q58 80 67 71 L66.500 76 Q62 84 40 84 Q18 84 13.500 76Z" fill="#c4c6c8" opacity=".55"/></svg>
      </div>
    </div>
  </div>
</div>
</body>
</html>
